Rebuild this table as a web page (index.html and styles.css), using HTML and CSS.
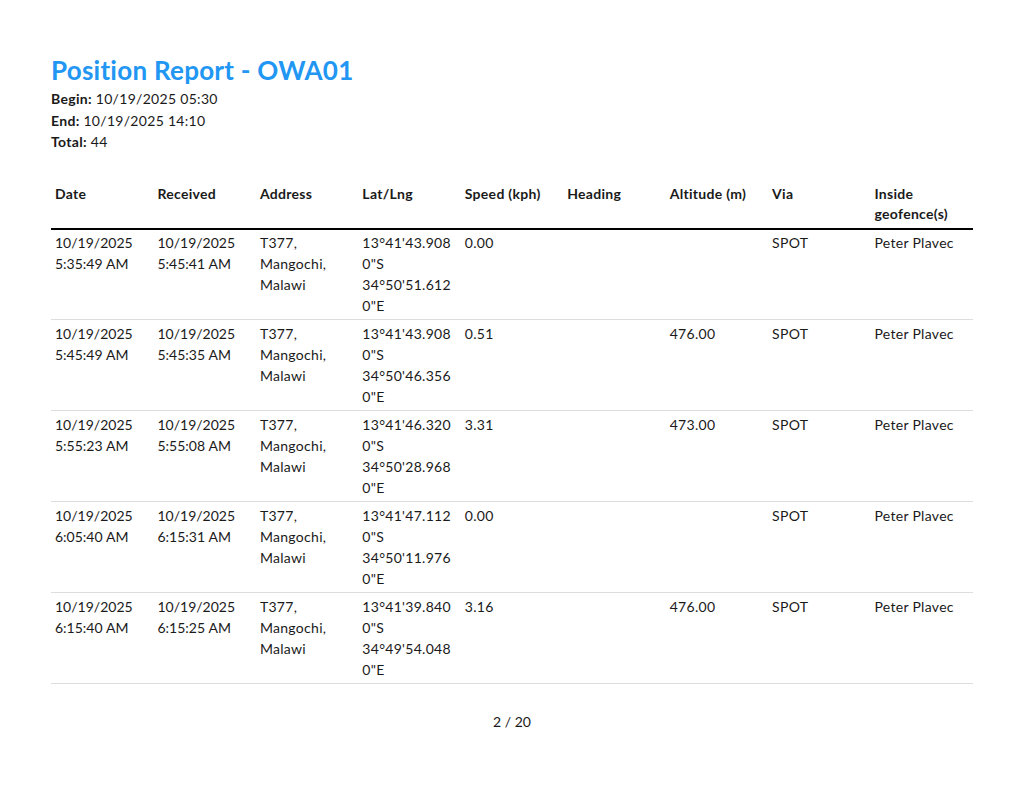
FILE: index.html
```html
<!DOCTYPE html>
<html lang="en">
<head>
<meta charset="utf-8">
<title>Position Report - OWA01</title>
<link rel="stylesheet" href="styles.css">
</head>
<body>
<div class="page">
  <h1 class="title">Position Report - OWA01</h1>
  <div class="meta">
    <div><b>Begin:</b> 10/19/2025 05:30</div>
    <div><b>End:</b> 10/19/2025 14:10</div>
    <div><b>Total:</b> 44</div>
  </div>
  <table class="report">
    <thead>
      <tr>
        <th>Date</th><th>Received</th><th>Address</th><th>Lat/Lng</th><th>Speed (kph)</th><th>Heading</th><th>Altitude (m)</th><th>Via</th><th>Inside geofence(s)</th>
      </tr>
    </thead>
    <tbody>
      <tr>
        <td class="dt">10/19/2025 5:35:49&#8239;AM</td><td class="dt">10/19/2025 5:45:41&#8239;AM</td><td>T377, Mangochi, Malawi</td><td>13°41'43.9080"S 34°50'51.6120"E</td><td>0.00</td><td></td><td></td><td>SPOT</td><td>Peter Plavec</td>
      </tr>
      <tr>
        <td class="dt">10/19/2025 5:45:49&#8239;AM</td><td class="dt">10/19/2025 5:45:35&#8239;AM</td><td>T377, Mangochi, Malawi</td><td>13°41'43.9080"S 34°50'46.3560"E</td><td>0.51</td><td></td><td>476.00</td><td>SPOT</td><td>Peter Plavec</td>
      </tr>
      <tr>
        <td class="dt">10/19/2025 5:55:23&#8239;AM</td><td class="dt">10/19/2025 5:55:08&#8239;AM</td><td>T377, Mangochi, Malawi</td><td>13°41'46.3200"S 34°50'28.9680"E</td><td>3.31</td><td></td><td>473.00</td><td>SPOT</td><td>Peter Plavec</td>
      </tr>
      <tr>
        <td class="dt">10/19/2025 6:05:40&#8239;AM</td><td class="dt">10/19/2025 6:15:31&#8239;AM</td><td>T377, Mangochi, Malawi</td><td>13°41'47.1120"S 34°50'11.9760"E</td><td>0.00</td><td></td><td></td><td>SPOT</td><td>Peter Plavec</td>
      </tr>
      <tr>
        <td class="dt">10/19/2025 6:15:40&#8239;AM</td><td class="dt">10/19/2025 6:15:25&#8239;AM</td><td>T377, Mangochi, Malawi</td><td>13°41'39.8400"S 34°49'54.0480"E</td><td>3.16</td><td></td><td>476.00</td><td>SPOT</td><td>Peter Plavec</td>
      </tr>
    </tbody>
  </table>
  <div class="pager">2 / 20</div>
</div>
</body>
</html>
```

FILE: styles.css
```css
html, body {
  margin: 0;
  padding: 0;
  background: #ffffff;
}

body {
  font-family: Lato, "Noto Sans", sans-serif;
  font-size: 14px;
  color: #1a1a1a;
  letter-spacing: 0.3px;
}

.page {
  width: 922px;
  margin: 0 0 0 51px;
  padding-top: 55px;
}

.title {
  margin: 0 0 2px 0;
  font-size: 26px;
  line-height: 1.2;
  font-weight: 700;
  color: #2196f3;
  letter-spacing: 0.25px;
}

.meta {
  line-height: 21.5px;
}

.meta b {
  font-weight: 700;
}

.report {
  margin-top: 28px;
  width: 922px;
  table-layout: fixed;
  border-collapse: collapse;
}

.report th,
.report td {
  text-align: left;
  vertical-align: top;
  overflow-wrap: break-word;
  word-wrap: break-word;
}

.report th {
  font-weight: 700;
  line-height: 20px;
  padding: 3px 4px 4px 4px;
  border-bottom: 2px solid #000000;
}

.report td {
  line-height: 21px;
  padding: 3px 4px 3px 4px;
  border-bottom: 1px solid #dddddd;
}

.report td.dt {
  letter-spacing: 0;
}

.report tbody tr:first-child td {
  padding-top: 2px;
}

.pager {
  margin-top: 27px;
  text-align: center;
  line-height: 21px;
  letter-spacing: 0;
}
```
